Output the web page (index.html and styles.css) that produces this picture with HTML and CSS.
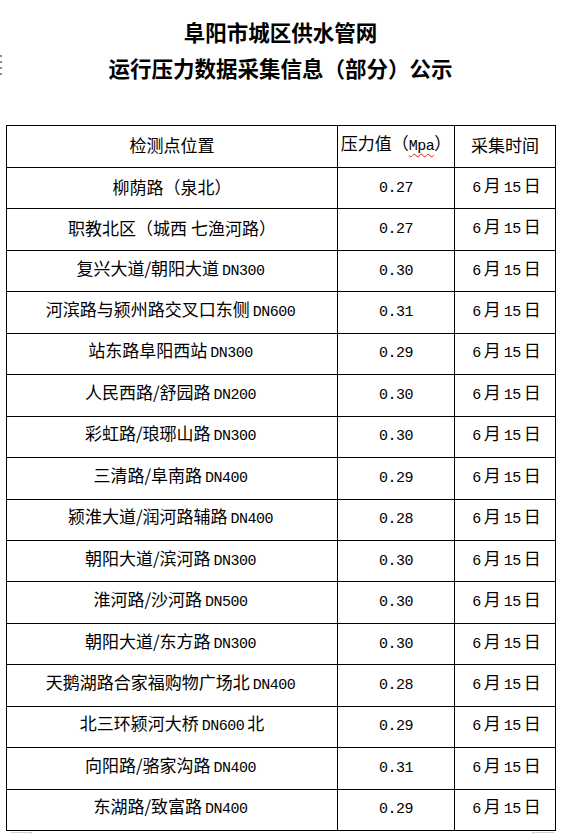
FILE: index.html
```html
<!DOCTYPE html>
<html lang="zh-CN">
<head>
<meta charset="utf-8">
<title>阜阳市城区供水管网运行压力数据采集信息（部分）公示</title>
<link rel="stylesheet" href="styles.css">
</head>
<body>
<div class="page">
  <span class="margin-dots"></span>
  <h1 class="title">阜阳市城区供水管网<br>运行压力数据采集信息（部分）公示</h1>
  <table class="data">
    <colgroup>
      <col class="c-loc"><col class="c-val"><col class="c-time">
    </colgroup>
    <tr class="head">
      <td>检测点位置</td>
      <td>压力值（<span class="lat tight spell">Mpa</span>）</td>
      <td>采集时间</td>
    </tr>
    <tr><td>柳荫路（泉北）</td><td><span class="lat">0.27</span></td><td><span class="lat">6</span>月<span class="lat">15</span>日</td></tr>
    <tr><td>职教北区（城西 七渔河路）</td><td><span class="lat">0.27</span></td><td><span class="lat">6</span>月<span class="lat">15</span>日</td></tr>
    <tr><td>复兴大道/朝阳大道<span class="lat">DN300</span></td><td><span class="lat">0.30</span></td><td><span class="lat">6</span>月<span class="lat">15</span>日</td></tr>
    <tr><td>河滨路与颍州路交叉口东侧<span class="lat">DN600</span></td><td><span class="lat">0.31</span></td><td><span class="lat">6</span>月<span class="lat">15</span>日</td></tr>
    <tr><td>站东路阜阳西站<span class="lat">DN300</span></td><td><span class="lat">0.29</span></td><td><span class="lat">6</span>月<span class="lat">15</span>日</td></tr>
    <tr><td>人民西路/舒园路<span class="lat">DN200</span></td><td><span class="lat">0.30</span></td><td><span class="lat">6</span>月<span class="lat">15</span>日</td></tr>
    <tr><td>彩虹路/琅琊山路<span class="lat">DN300</span></td><td><span class="lat">0.30</span></td><td><span class="lat">6</span>月<span class="lat">15</span>日</td></tr>
    <tr><td>三清路/阜南路<span class="lat">DN400</span></td><td><span class="lat">0.29</span></td><td><span class="lat">6</span>月<span class="lat">15</span>日</td></tr>
    <tr><td>颍淮大道/润河路辅路<span class="lat">DN400</span></td><td><span class="lat">0.28</span></td><td><span class="lat">6</span>月<span class="lat">15</span>日</td></tr>
    <tr><td>朝阳大道/滨河路<span class="lat">DN300</span></td><td><span class="lat">0.30</span></td><td><span class="lat">6</span>月<span class="lat">15</span>日</td></tr>
    <tr><td>淮河路/沙河路<span class="lat">DN500</span></td><td><span class="lat">0.30</span></td><td><span class="lat">6</span>月<span class="lat">15</span>日</td></tr>
    <tr><td>朝阳大道/东方路<span class="lat">DN300</span></td><td><span class="lat">0.30</span></td><td><span class="lat">6</span>月<span class="lat">15</span>日</td></tr>
    <tr><td>天鹅湖路合家福购物广场北<span class="lat">DN400</span></td><td><span class="lat">0.28</span></td><td><span class="lat">6</span>月<span class="lat">15</span>日</td></tr>
    <tr><td>北三环颍河大桥<span class="lat">DN600</span>北</td><td><span class="lat">0.29</span></td><td><span class="lat">6</span>月<span class="lat">15</span>日</td></tr>
    <tr><td>向阳路/骆家沟路<span class="lat">DN400</span></td><td><span class="lat">0.31</span></td><td><span class="lat">6</span>月<span class="lat">15</span>日</td></tr>
    <tr><td>东湖路/致富路<span class="lat">DN400</span></td><td><span class="lat">0.29</span></td><td><span class="lat">6</span>月<span class="lat">15</span>日</td></tr>
  </table>
  <div class="corners">
    <span class="corner corner-l"></span>
    <span class="corner corner-r"></span>
  </div>
</div>
</body>
</html>
```
FILE: styles.css
```css
html, body {
  margin: 0;
  padding: 0;
  background: #ffffff;
}

.page {
  position: relative;
  width: 561px;
  height: 834px;
  overflow: hidden;
  padding-left: 6px;
  box-sizing: border-box;
  font-family: "Noto Sans CJK SC", "Noto Sans", sans-serif;
  color: #000;
}

.margin-dots {
  position: absolute;
  left: 0;
  top: 55px;
  width: 2px;
  height: 20px;
  background-image: linear-gradient(#8a8a8a 0, #8a8a8a 2px, transparent 2px);
  background-size: 2px 6px;
}

.title {
  width: 549px;
  margin: 14px 0 0 0;
  text-align: center;
  font-size: 21.5px;
  line-height: 36px;
  font-weight: 700;
}

.data {
  margin-top: 39px;
  width: 549px;
  border-collapse: collapse;
  table-layout: fixed;
  font-size: 17px;
}

.c-loc { width: 331px; }
.c-val { width: 117px; }
.c-time { width: 101px; }

.data tr {
  height: 41.45px;
}

.data tr.head {
  height: 42px;
}

.data td {
  border: 1px solid #000;
  padding: 0 0 3px 0;
  text-align: center;
  vertical-align: middle;
  font-weight: 400;
  line-height: 20px;
  white-space: nowrap;
  color: #000;
}

.lat {
  font-family: "Liberation Mono", "DejaVu Sans Mono", monospace;
  font-size: 15px;
  letter-spacing: -0.5px;
  margin: 0 3px;
}

.lat.tight {
  margin: 0;
}

.spell {
  text-decoration: underline wavy #e02020;
  text-decoration-thickness: 1px;
  text-underline-offset: 3px;
}

.corners {
  position: relative;
  width: 549px;
  height: 4px;
}

.corner {
  position: absolute;
  top: 1px;
  width: 20px;
  height: 4px;
  border-top: 1px solid #d0d0d0;
}

.corner-l {
  left: 5px;
  border-right: 1px solid #d0d0d0;
}

.corner-r {
  right: 1px;
  width: 21px;
  border-left: 1px solid #d0d0d0;
}
```
